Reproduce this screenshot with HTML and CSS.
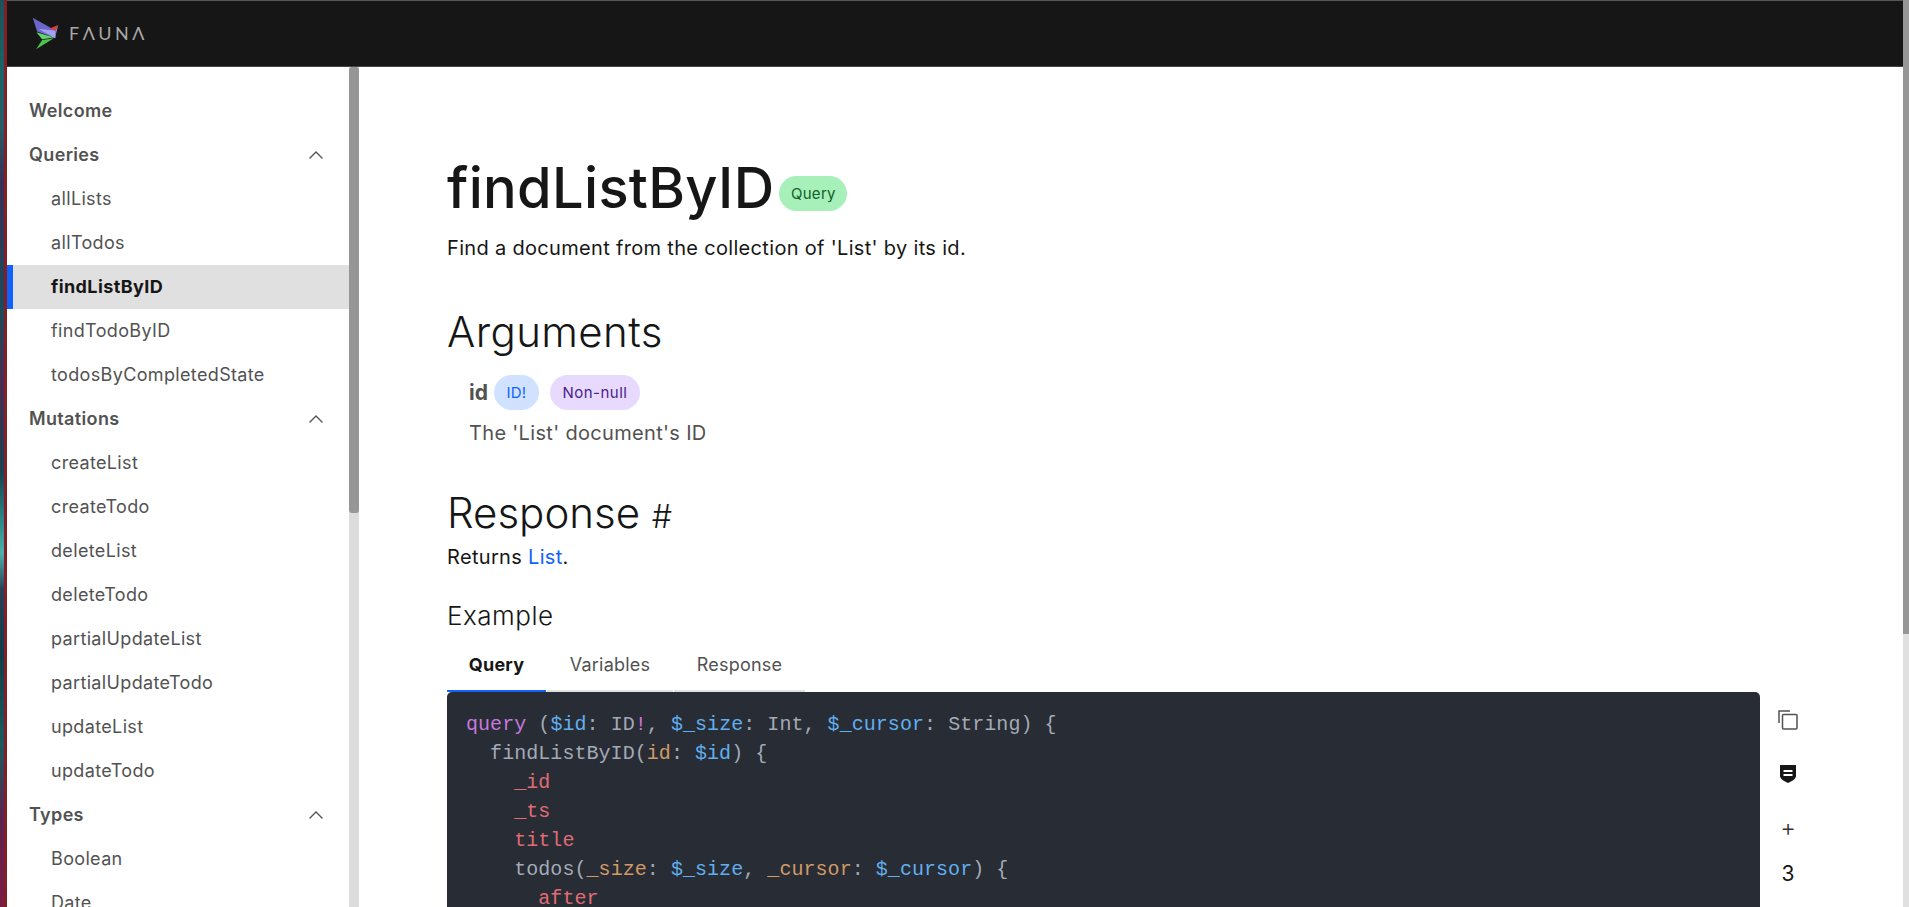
FILE: index.html
```html
<!DOCTYPE html>
<html lang="en">
<head>
<meta charset="utf-8">
<title>findListByID</title>
<link rel="stylesheet" href="styles.css">
</head>
<body>
<div class="desktop"></div>
<div class="edge"></div>
<div class="window">
  <header class="topbar">
    <svg class="logo" width="27" height="33" viewBox="95 52 80 98"><polygon points="97,54 165,92 165,115 110,95" fill="#6a66cc"/><polygon points="115,88 165,92 163,115" fill="#a3a0ee"/><polygon points="147,86 173,76 165,92" fill="#e23b3b"/><polygon points="165,92 173,76 163,115" fill="#8f8cd8"/><polygon points="108,97 160,113 125,118" fill="#63d46a"/><polygon points="125,120 160,115 107,148" fill="#4cc24f"/></svg>
    <span class="wordmark">FΛUNΛ</span>
  </header>
  <div class="body">
    <nav class="sidebar">
      <div class="nav-list">
        <a class="nav-head">Welcome</a>
        <a class="nav-head">Queries <svg class="chev" viewBox="0 0 16 10"><path d="M1.500 8.500 8 2l6.500 6.500" /></svg></a>
        <a class="nav-item">allLists</a>
        <a class="nav-item">allTodos</a>
        <a class="nav-item active">findListByID</a>
        <a class="nav-item">findTodoByID</a>
        <a class="nav-item">todosByCompletedState</a>
        <a class="nav-head">Mutations <svg class="chev" viewBox="0 0 16 10"><path d="M1.500 8.500 8 2l6.500 6.500" /></svg></a>
        <a class="nav-item">createList</a>
        <a class="nav-item">createTodo</a>
        <a class="nav-item">deleteList</a>
        <a class="nav-item">deleteTodo</a>
        <a class="nav-item">partialUpdateList</a>
        <a class="nav-item">partialUpdateTodo</a>
        <a class="nav-item">updateList</a>
        <a class="nav-item">updateTodo</a>
        <a class="nav-head">Types <svg class="chev" viewBox="0 0 16 10"><path d="M1.500 8.500 8 2l6.500 6.500" /></svg></a>
        <a class="nav-item">Boolean</a>
        <a class="nav-item">Date</a>
      </div>
      <div class="side-track"><div class="side-thumb"></div></div>
    </nav>
    <main class="content">
      <div class="title-row">
        <h1>findListByID</h1>
        <span class="pill pill-green">Query</span>
      </div>
      <p class="lead">Find a document from the collection of 'List' by its id.</p>
      <h2 class="args-title">Arguments</h2>
      <div class="arg">
        <div class="arg-line">
          <b class="arg-name">id</b>
          <span class="pill pill-blue">ID!</span>
          <span class="pill pill-purple">Non-null</span>
        </div>
        <p class="arg-desc">The 'List' document's ID</p>
      </div>
      <h2 class="resp-title">Response <span class="hash">#</span></h2>
      <p class="returns">Returns <a class="link">List</a>.</p>
      <h3 class="example">Example</h3>
      <div class="tabs">
        <span class="tab tab-query">Query</span>
        <span class="tab tab-vars">Variables</span>
        <span class="tab tab-resp">Response</span>
      </div>
      <div class="code-row">
        <pre class="code"><span class="k">query</span> (<span class="v">$id</span>: ID<span class="k">!</span>, <span class="v">$_size</span>: Int, <span class="v">$_cursor</span>: String) {
  findListByID(<span class="a">id</span>: <span class="v">$id</span>) {
    <span class="f">_id</span>
    <span class="f">_ts</span>
    <span class="f">title</span>
    todos(<span class="a">_size</span>: <span class="v">$_size</span>, <span class="a">_cursor</span>: <span class="v">$_cursor</span>) {
      <span class="f">after</span>
</pre>
        <div class="tools">
          <svg class="tool-copy" width="20" height="20" viewBox="0 0 20 20"><path d="M1 13V1h11" /><rect x="4.500" y="4.500" width="14.500" height="14.500" rx="1" /></svg>
          <svg class="tool-shield" width="18" height="20" viewBox="0 0 18 20"><path d="M1 1h16v11c0 3-4 5-8 7-4-2-8-4-8-7z" /><path class="bars" d="M4.500 7h9M4.500 11h9" /></svg>
          <span class="tool-plus">+</span>
          <span class="tool-count">3</span>
        </div>
      </div>
    </main>
  </div>
</div>
<div class="page-track"><div class="page-thumb"></div></div>
</body>
</html>
```
FILE: styles.css
```css
* { box-sizing: border-box; }
html, body { margin: 0; height: 100%; overflow: hidden; }
body {
  display: flex;
  font-family: "Inter", "Noto Sans", sans-serif;
  background: #fff;
  color: #161616;
}
.desktop {
  width: 4px;
  flex: none;
  background: linear-gradient(180deg, #1d4f5c 0, #1b6468 8%, #2a5a66 14%, #3a2f55 20%, #1c4a5a 34%, #4a2b50 42%, #1b4050 52%, #2f8f8e 58%, #4fb0aa 61%, #2a3f58 65%, #123c48 72%, #1c5a5c 82%, #5a2350 90%, #7e1c42 100%);
}
.edge { width: 3px; flex: none; background: #7f1f26; }
.window { flex: 1; min-width: 0; display: flex; flex-direction: column; height: 907px; border-top: 1px solid #555; }
.topbar {
  height: 66px;
  flex: none;
  background: #161616;
  border-bottom: 1px solid #444;
  display: flex;
  align-items: center;
  padding: 0 0 2px 25px;
  gap: 10px;
}
.logo { flex: none; margin-top: 1px; }
.wordmark { color: #a8a8a8; font-size: 18px; letter-spacing: 3.500px; font-family: "Lato", sans-serif; font-weight: 400; }
.body { flex: 1; min-height: 0; display: flex; }
.sidebar { width: 352px; flex: none; display: flex; overflow: hidden; }
.nav-list { flex: 1; min-width: 0; padding-top: 22px; }
.nav-head, .nav-item {
  display: flex;
  align-items: center;
  height: 44px;
  font-size: 18px;
  letter-spacing: .35px;
  color: #525252;
  padding-bottom: 2px;
}
.nav-head { font-weight: 600; padding: 0 25px 2px 22px; justify-content: space-between; }
.nav-item { padding-left: 44px; }
.nav-item.active { background: #e0e0e0; border-left: 6px solid #0f62fe; padding-left: 38px; color: #161616; font-weight: 700; letter-spacing: .4px; }
.chev { width: 16px; height: 10px; fill: none; stroke: #525252; stroke-width: 1.300; margin-top: 2px; }
.side-track { width: 10px; flex: none; background: #dcdcdc; }
.side-thumb { height: 446px; background: #969696; border-radius: 3px; }
.content { flex: 1; min-width: 0; padding: 86px 0 0 88px; overflow: hidden; }
.title-row { display: flex; align-items: center; gap: 5px; height: 70px; }
h1 { margin: 0; font-size: 56px; font-weight: 500; line-height: 70px; letter-spacing: .3px; }
.pill { display: inline-flex; align-items: center; justify-content: center; height: 35px; border-radius: 18px; font-size: 15px; letter-spacing: .3px; }
.pill-green { background: #a7f0ba; color: #0e6027; width: 68px; margin-top: 10px; }
.pill-blue { background: #d0e2ff; color: #0f62fe; width: 45px; }
.pill-purple { background: #e8daff; color: #491d8b; width: 90px; margin-left: 11px; letter-spacing: .5px; }
.lead { margin: 10px 0 0; font-size: 20px; line-height: 30px; letter-spacing: .32px; }
h2 { margin: 0; font-weight: 300; font-size: 42px; line-height: 54px; }
.args-title { margin-top: 42px; letter-spacing: .4px; }
.arg { padding-left: 22px; margin-top: 16px; }
.arg-line { display: flex; align-items: center; height: 35px; }
.arg-name { font-size: 21px; font-weight: 700; color: #525252; margin-right: 6px; }
.arg-desc { margin: 8px 0 0; font-size: 20px; line-height: 30px; color: #525252; letter-spacing: .32px; }
.resp-title { margin-top: 38px; }
.hash { font-size: 32px; }
.returns { margin: -2px 0 0; font-size: 20px; line-height: 30px; letter-spacing: .32px; }
.link { color: #0f62fe; }
.example { margin: 26px 0 0; font-size: 26px; font-weight: 300; line-height: 36px; letter-spacing: .5px; }
.tabs { display: flex; gap: 1px; margin-top: 7px; height: 51px; }
.tab { display: flex; align-items: center; justify-content: center; font-size: 18px; color: #525252; border-bottom: 2px solid #e0e0e0; padding-bottom: 2px; letter-spacing: .2px; }
.tab-query { width: 99px; color: #161616; font-weight: 700; border-bottom-color: #0f62fe; }
.tab-vars { width: 126px; }
.tab-resp { width: 131px; }
.code-row { display: flex; align-items: flex-start; }
.code {
  margin: 0;
  width: 1313px;
  height: 400px;
  flex: none;
  background: #282c34;
  border-radius: 5px;
  padding: 18px 19px;
  color: #a3aab7;
  font: 20px/29px "Liberation Mono", monospace;
  letter-spacing: .05px;
}
.k { color: #c678dd; }
.v { color: #61afef; }
.a { color: #d19a66; }
.f { color: #e06c75; }
.tools { display: flex; flex-direction: column; align-items: center; width: 56px; padding-top: 18px; }
.tool-copy { fill: none; stroke: #525252; stroke-width: 1.500; }
.tool-shield { fill: #161616; margin-top: 34px; }
.bars { stroke: #fff; stroke-width: 2; fill: none; }
.tool-plus { font-size: 24px; font-weight: 300; line-height: 30px; margin-top: 29px; color: #333; }
.tool-count { font-size: 21px; line-height: 30px; margin-top: 16px; }
.page-track { width: 6px; flex: none; background: #e0e0e0; }
.page-thumb { height: 634px; background: #969696; }
```
